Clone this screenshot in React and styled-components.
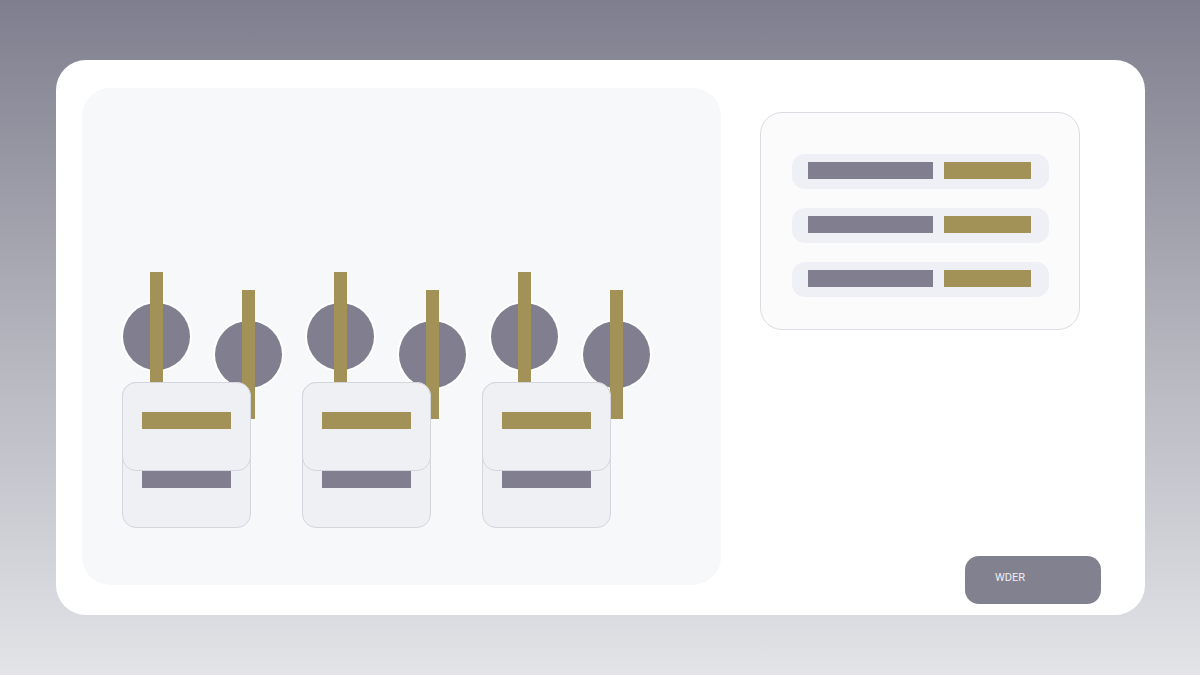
import React from "react";
import styled, { createGlobalStyle } from "styled-components";

const GOLD = "#a39258";
const SLATE = "#817f8f";

const Global = createGlobalStyle`
  html, body { margin: 0; padding: 0; }
  body {
    width: 1200px;
    height: 675px;
    overflow: hidden;
    background: linear-gradient(180deg, #7f7e8e 0%, #b3b3bc 50%, #e2e4e8 100%);
    font-family: Roboto, "Liberation Sans", sans-serif;
  }
`;

const Page = styled.div`
  box-sizing: border-box;
  width: 1200px;
  height: 675px;
  padding: 60px 55px 60px 56px;
`;

const Card = styled.div`
  box-sizing: border-box;
  height: 555px;
  background: #ffffff;
  border-radius: 30px;
  padding: 28px 44px 0 26px;
  display: flex;
`;

const Stage = styled.section`
  flex: none;
  align-self: flex-start;
  box-sizing: border-box;
  width: 639px;
  height: 497px;
  background: #f7f8fa;
  border-radius: 28px;
  padding: 184px 0 0 40px;
  display: flex;
  flex-direction: column;
`;

const PinRow = styled.div`
  display: flex;
  align-items: flex-start;
  gap: 25px;
  margin-left: 1px;
`;

const Pin = styled.div`
  position: relative;
  flex: none;
  width: 67px;
  height: 129px;
  margin-top: ${(p) => (p.$low ? "18px" : "0")};

  &::after {
    content: "";
    position: absolute;
    left: 27px;
    top: 0;
    width: 13px;
    height: 129px;
    background: ${GOLD};
  }
`;

const Knob = styled.div`
  width: 67px;
  height: 67px;
  margin-top: 31px;
  border-radius: 50%;
  background: ${SLATE};
  box-shadow: 0 0 0 2px #ffffff;
`;

const TagRow = styled.div`
  display: flex;
  gap: 51px;
  margin-top: -37px;
  position: relative;
  z-index: 1;
`;

const Tag = styled.div`
  box-sizing: border-box;
  width: 129px;
  height: 146px;
  background: #eff0f4;
  border: 1px solid #d5d6dd;
  border-radius: 14px;
  display: flex;
  flex-direction: column;
  align-items: center;
`;

const Flap = styled.div`
  box-sizing: border-box;
  width: 129px;
  height: 89px;
  margin: -1px -1px 0;
  background: #eff0f4;
  border: 1px solid #d5d6dd;
  border-radius: 14px;
  padding-top: 29px;
  display: flex;
  justify-content: center;
`;

const Strip = styled.div`
  width: ${(p) => p.$w}px;
  height: 17px;
  background: ${(p) => (p.$gold ? GOLD : SLATE)};
  flex: none;
`;

const Side = styled.aside`
  flex: 1;
  margin-left: 39px;
  padding-top: 24px;
  display: flex;
  flex-direction: column;
`;

const Legend = styled.div`
  box-sizing: border-box;
  width: 320px;
  background: #fbfbfc;
  border: 1px solid #dcdce3;
  border-radius: 22px;
  padding: 41px 0 32px 31px;
  display: flex;
  flex-direction: column;
  gap: 19px;
`;

const LegendRow = styled.div`
  box-sizing: border-box;
  width: 257px;
  height: 35px;
  background: #eef0f5;
  border-radius: 13px;
  padding: 8px 0 0 16px;
  display: flex;
  gap: 11px;
`;

const Action = styled.button`
  box-sizing: border-box;
  margin-top: auto;
  margin-bottom: 11px;
  align-self: flex-end;
  width: 136px;
  height: 48px;
  border: none;
  border-radius: 14px;
  background: #828190;
  color: #eeeef3;
  font-family: Roboto, "Liberation Sans", sans-serif;
  font-size: 11px;
  line-height: 13px;
  text-align: left;
  padding: 0 0 5px 30px;
  cursor: pointer;
`;

const pins = [0, 1, 2, 3, 4, 5];
const tags = [0, 1, 2];
const rows = [0, 1, 2];

export default function App() {
  return (
    <>
      <Global />
      <Page>
        <Card>
          <Stage>
            <PinRow>
              {pins.map((i) => (
                <Pin key={i} $low={i % 2 === 1}>
                  <Knob />
                </Pin>
              ))}
            </PinRow>
            <TagRow>
              {tags.map((i) => (
                <Tag key={i}>
                  <Flap>
                    <Strip $gold $w={89} />
                  </Flap>
                  <Strip $w={89} />
                </Tag>
              ))}
            </TagRow>
          </Stage>
          <Side>
            <Legend>
              {rows.map((i) => (
                <LegendRow key={i}>
                  <Strip $w={125} />
                  <Strip $gold $w={87} />
                </LegendRow>
              ))}
            </Legend>
            <Action>WDER</Action>
          </Side>
        </Card>
      </Page>
    </>
  );
}
